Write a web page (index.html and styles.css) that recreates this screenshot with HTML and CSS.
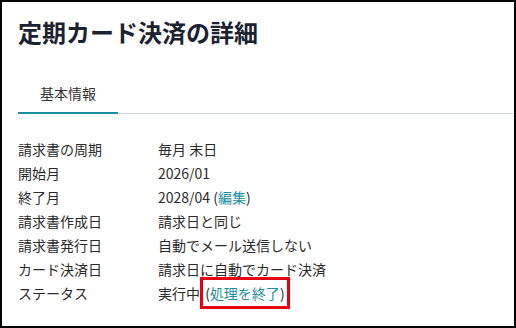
FILE: index.html
```html
<!DOCTYPE html>
<html lang="ja">
<head>
<meta charset="utf-8">
<link rel="stylesheet" href="styles.css">
</head>
<body>
<div class="frame">
  <h1 class="title">定期カード決済の詳細</h1>
  <div class="tabs">
    <div class="tab active">基本情報</div>
  </div>
  <dl class="details">
    <div class="row"><dt>請求書の周期</dt><dd>毎月 末日</dd></div>
    <div class="row"><dt>開始月</dt><dd>2026/01</dd></div>
    <div class="row"><dt>終了月</dt><dd>2028/04 (<a class="link" href="#">編集</a>)</dd></div>
    <div class="row"><dt>請求書作成日</dt><dd>請求日と同じ</dd></div>
    <div class="row"><dt>請求書発行日</dt><dd>自動でメール送信しない</dd></div>
    <div class="row"><dt>カード決済日</dt><dd>請求日に自動でカード決済</dd></div>
    <div class="row"><dt>ステータス</dt><dd>実行中 <span class="highlight">(<a class="link" href="#">処理を終了</a>)</span></dd></div>
  </dl>
</div>
</body>
</html>
```
FILE: styles.css
```css
* { box-sizing: border-box; }
html, body { margin: 0; padding: 0; background: #fff; }
body {
  font-family: "Noto Sans CJK JP", "Noto Sans", sans-serif;
  color: #2b2b2b;
}
.frame {
  width: 516px;
  height: 328px;
  border: 2px solid #000;
  padding: 14px 0 0 16px;
  overflow: hidden;
}
.title {
  margin: 0;
  font-size: 24px;
  line-height: 32px;
  font-weight: 700;
  color: #1c2330;
}
.tabs {
  margin-top: 33px;
  display: flex;
  border-bottom: 1px solid #d5dde3;
}
.tab {
  width: 100px;
  text-align: center;
  font-size: 14px;
  line-height: 24px;
  padding-bottom: 7px;
  color: #333;
}
.tab.active {
  border-bottom: 2px solid #16909f;
  margin-bottom: -1px;
}
.details {
  margin: 23px 0 0 0;
  font-size: 14px;
  line-height: 24px;
}
.row { display: flex; }
.row dt { width: 140px; margin: 0; }
.row dd { margin: 0; }
.link { color: #1a8ea0; text-decoration: none; }
.highlight {
  outline: 3px solid #e60012;
  outline-offset: 0;
  padding: 3px 2px;
}
```
